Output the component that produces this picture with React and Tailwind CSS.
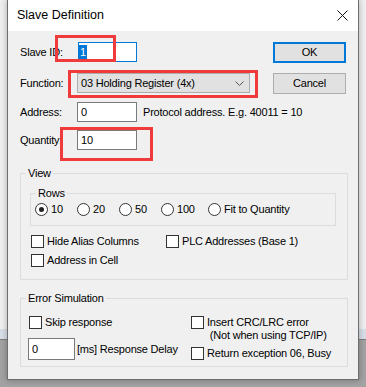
import React from "react";

function CheckBox({ label, className = "" }) {
  return (
    <div className={"flex items-start " + className}>
      <span className="w-[13px] h-[13px] border border-[#333] bg-white shrink-0" />
      <span className="ml-[3px] leading-[13px]">{label}</span>
    </div>
  );
}

function Radio({ label, checked, className = "" }) {
  return (
    <div className={"flex items-center " + className}>
      <span className="w-[13px] h-[13px] rounded-full border border-[#333] bg-white flex items-center justify-center shrink-0">
        {checked && <span className="w-[5px] h-[5px] rounded-full bg-[#222]" />}
      </span>
      <span className="ml-[3px] leading-[13px]">{label}</span>
    </div>
  );
}

function Field({ value, className = "" }) {
  return (
    <div className={"h-[20px] border border-[#7a7a7a] bg-white flex items-center pl-[3px] " + className}>
      {value}
    </div>
  );
}

export default function App() {
  return (
    <div className="relative w-[366px] h-[387px] overflow-hidden flex flex-col font-['Liberation_Sans',Arial,sans-serif] text-[11px] tracking-[-0.2px] text-black">
      {/* desktop behind the dialog */}
      <div className="h-[329px] bg-[#efefef]" />
      <div className="h-[11px] bg-[#d7dee7] border-b border-[#7f7f7f]" />
      <div className="flex-1 bg-[#a2a2a2]" />

      {/* dialog window */}
      <div className="absolute left-[7px] top-0 w-[352px] h-[380px] flex flex-col border-x border-b border-[#6e6e6e] shadow-[0_0_6px_rgba(0,0,0,0.3)]">
        <div className="h-[31px] bg-white flex items-center justify-between pl-[9px] pr-[10px]">
          <span className="text-[12.5px] tracking-normal">Slave Definition</span>
          <svg width="11" height="11" viewBox="0 0 11 11">
            <path d="M0.5 0.5L10.5 10.5M10.5 0.5L0.5 10.5" stroke="#111" strokeWidth="1" />
          </svg>
        </div>

        <div className="relative flex-1 bg-[#f0f0f0] flex flex-col pl-[12px]">
          {/* Slave ID */}
          <div className="mt-[11px] h-[21px] flex items-start">
            <div className="w-[57px] h-[20px] flex items-center">Slave ID:</div>
            <div className="ml-[1px] w-[59px] h-[20px] border border-[#0078d7] bg-white pt-[1px]">
              <span className="inline-block h-[14px] leading-[14px] px-[1px] bg-[#0078d7] text-white">1</span>
            </div>
            <button className="ml-auto mr-[12px] w-[73px] h-[21px] border-2 border-[#0078d7] bg-[#e1e1e1] text-[11px]">OK</button>
          </div>

          {/* Function */}
          <div className="mt-[10px] h-[21px] flex items-start">
            <div className="w-[57px] h-[20px] flex items-center">Function:</div>
            <div className="w-[173px] h-[20px] border border-[#adadad] bg-[#e1e1e1] flex items-center justify-between pl-[3px] pr-[5px]">
              <span>03 Holding Register (4x)</span>
              <svg width="9" height="5" viewBox="0 0 9 5">
                <path d="M0.5 0.5L4.5 4.5L8.5 0.5" fill="none" stroke="#555" strokeWidth="1" />
              </svg>
            </div>
            <button className="ml-auto mr-[12px] w-[73px] h-[21px] border border-[#adadad] bg-[#e1e1e1] text-[11px]">Cancel</button>
          </div>

          {/* Address */}
          <div className="mt-[8px] h-[20px] flex items-center">
            <div className="w-[57px]">Address:</div>
            <Field value="0" className="w-[60px]" />
            <span className="ml-[6px]">Protocol address. E.g. 40011 = 10</span>
          </div>

          {/* Quantity */}
          <div className="mt-[8px] h-[20px] flex items-center">
            <div className="w-[57px]">Quantity:</div>
            <Field value="10" className="w-[60px]" />
          </div>

          {/* View */}
          <fieldset className="mt-[16px] w-[328px] border border-[#dcdcdc] pb-[12px]">
            <legend className="ml-[5px] px-[2px] leading-[14px]">View</legend>
            <fieldset className="mt-[6px] ml-[9px] w-[306px] border border-[#dcdcdc] pb-[9px]">
              <legend className="ml-[5px] px-[2px] leading-[14px]">Rows</legend>
              <div className="mt-[3px] ml-[4px] flex items-center">
                <Radio label="10" checked className="w-[42px]" />
                <Radio label="20" className="w-[42px]" />
                <Radio label="50" className="w-[42px]" />
                <Radio label="100" className="w-[47px]" />
                <Radio label="Fit to Quantity" />
              </div>
            </fieldset>
            <div className="mt-[9px] ml-[10px] flex">
              <CheckBox label="Hide Alias Columns" className="w-[135px]" />
              <CheckBox label="PLC Addresses (Base 1)" />
            </div>
            <CheckBox label="Address in Cell" className="mt-[6px] ml-[10px]" />
          </fieldset>

          {/* Error Simulation */}
          <fieldset className="mt-[11px] w-[328px] border border-[#dcdcdc] pb-[6px]">
            <legend className="ml-[5px] px-[2px] leading-[14px]">Error Simulation</legend>
            <div className="mt-[11px] ml-[8px] flex">
              <div className="w-[162px] flex flex-col">
                <CheckBox label="Skip response" />
                <div className="mt-[9px] ml-[-1px] flex items-center">
                  <div className="w-[47px] h-[22px] border border-[#7a7a7a] bg-white flex items-center pl-[3px]">0</div>
                  <span className="ml-[2px]">[ms] Response Delay</span>
                </div>
              </div>
              <div className="flex flex-col">
                <CheckBox
                  label={
                    <>
                      Insert CRC/LRC error
                      <br />
                      &nbsp;(Not when using TCP/IP)
                    </>
                  }
                />
                <CheckBox label="Return exception 06, Busy" className="mt-[5px]" />
              </div>
            </div>
          </fieldset>

          {/* red annotation boxes */}
          <div className="absolute left-[47px] top-[4px] w-[61px] h-[27px] border-[3px] border-[#ef3b3b]" />
          <div className="absolute left-[60px] top-[39px] w-[190px] h-[28px] border-[3px] border-[#ef3b3b]" />
          <div className="absolute left-[52px] top-[96px] w-[93px] h-[34px] border-[3px] border-[#ef3b3b]" />
        </div>
      </div>
    </div>
  );
}
